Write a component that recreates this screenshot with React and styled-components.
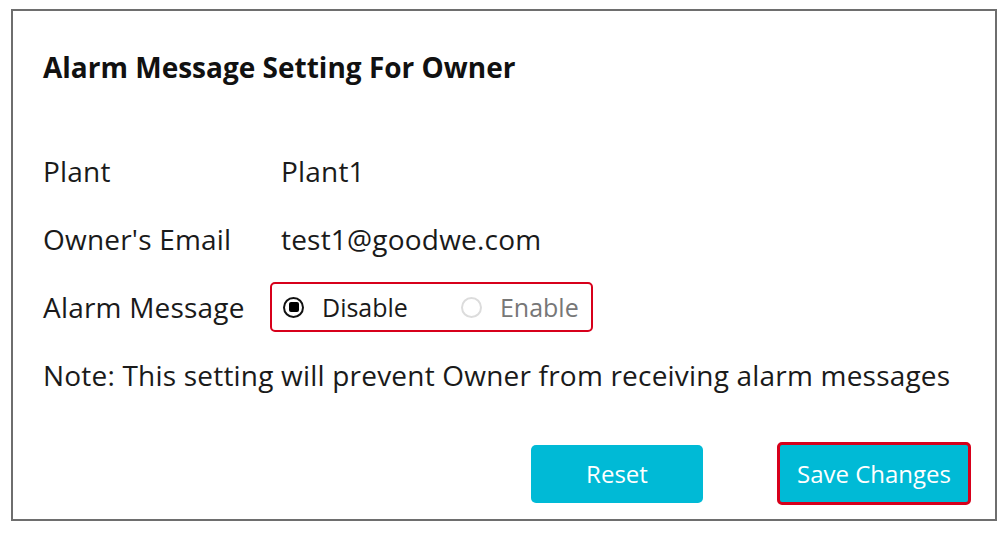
import React, { useState } from "react";
import styled, { createGlobalStyle } from "styled-components";

const GlobalStyle = createGlobalStyle`
  html, body {
    margin: 0;
    padding: 0;
    background: #ffffff;
  }
  body {
    font-family: "Open Sans", "Liberation Sans", sans-serif;
    color: #1a1a1a;
  }
`;

const Page = styled.div`
  width: 1006px;
  height: 535px;
  padding: 9px 9px 0 11px;
  box-sizing: border-box;
`;

const Panel = styled.div`
  width: 986px;
  height: 512px;
  box-sizing: border-box;
  border: 2px solid #6e6e6e;
  padding: 40px 0 0 30px;
  display: flex;
  flex-direction: column;
`;

const Title = styled.h2`
  margin: 0;
  font-size: 28px;
  font-weight: 700;
  color: #111;
  line-height: 32px;
`;

const Rows = styled.div`
  display: flex;
  flex-direction: column;
  margin-top: 68px;
  gap: 28px;
`;

const Row = styled.div`
  display: flex;
  align-items: center;
  height: 40px;
  font-size: 28px;
  letter-spacing: 0.2px;
`;

const Label = styled.span`
  width: 238px;
  flex-shrink: 0;
  color: #1a1a1a;
`;

const Value = styled.span`
  color: #1a1a1a;
`;

const RadioGroup = styled.div`
  display: flex;
  align-items: center;
  margin-left: -11px;
  height: 50px;
  width: 323px;
  box-sizing: border-box;
  border: 2.5px solid #d7001b;
  border-radius: 5px;
  padding-left: 11px;
  gap: 53px;
`;

const RadioOption = styled.label`
  display: flex;
  align-items: center;
  gap: 18px;
  font-size: 25px;
  letter-spacing: 0;
  color: ${(p) => (p.checked ? "#1a1a1a" : "#777")};
  cursor: pointer;
`;

const RadioCircle = styled.span`
  width: 21px;
  height: 21px;
  box-sizing: border-box;
  border-radius: 50%;
  border: 2.5px solid ${(p) => (p.checked ? "#111" : "#dcdcdc")};
  display: flex;
  align-items: center;
  justify-content: center;

  &::after {
    content: "";
    display: ${(p) => (p.checked ? "block" : "none")};
    width: 10px;
    height: 10px;
    border-radius: 2px;
    background: #000;
  }
`;

const Note = styled.div`
  font-size: 28px;
  letter-spacing: 0.2px;
  color: #1a1a1a;
  height: 40px;
  line-height: 40px;
  white-space: nowrap;
`;

const Actions = styled.div`
  display: flex;
  justify-content: flex-end;
  align-items: center;
  gap: 74px;
  margin-top: 47px;
  padding-right: 24px;
`;

const Button = styled.button`
  height: ${(p) => (p.highlight ? 63 : 58)}px;
  width: ${(p) => p.width}px;
  box-sizing: border-box;
  background: #00bad6;
  color: #fff;
  border: ${(p) => (p.highlight ? "3px solid #d7001b" : "none")};
  border-radius: 5px;
  font-family: "Open Sans", "Liberation Sans", sans-serif;
  font-size: 24px;
  padding: 0;
  cursor: pointer;
`;

const App = () => {
  const [alarm, setAlarm] = useState("disable");

  return (
    <Page>
      <GlobalStyle />
      <Panel>
        <Title>Alarm Message Setting For Owner</Title>
        <Rows>
          <Row>
            <Label>Plant</Label>
            <Value>Plant1</Value>
          </Row>
          <Row>
            <Label>Owner's Email</Label>
            <Value>test1@goodwe.com</Value>
          </Row>
          <Row>
            <Label>Alarm Message</Label>
            <RadioGroup>
              <RadioOption
                checked={alarm === "disable"}
                onClick={() => setAlarm("disable")}
              >
                <RadioCircle checked={alarm === "disable"} />
                Disable
              </RadioOption>
              <RadioOption
                checked={alarm === "enable"}
                onClick={() => setAlarm("enable")}
              >
                <RadioCircle checked={alarm === "enable"} />
                Enable
              </RadioOption>
            </RadioGroup>
          </Row>
          <Note>
            Note: This setting will prevent Owner from receiving alarm messages
          </Note>
        </Rows>
        <Actions>
          <Button width={172}>Reset</Button>
          <Button width={194} highlight>
            Save Changes
          </Button>
        </Actions>
      </Panel>
    </Page>
  );
};

export default App;
